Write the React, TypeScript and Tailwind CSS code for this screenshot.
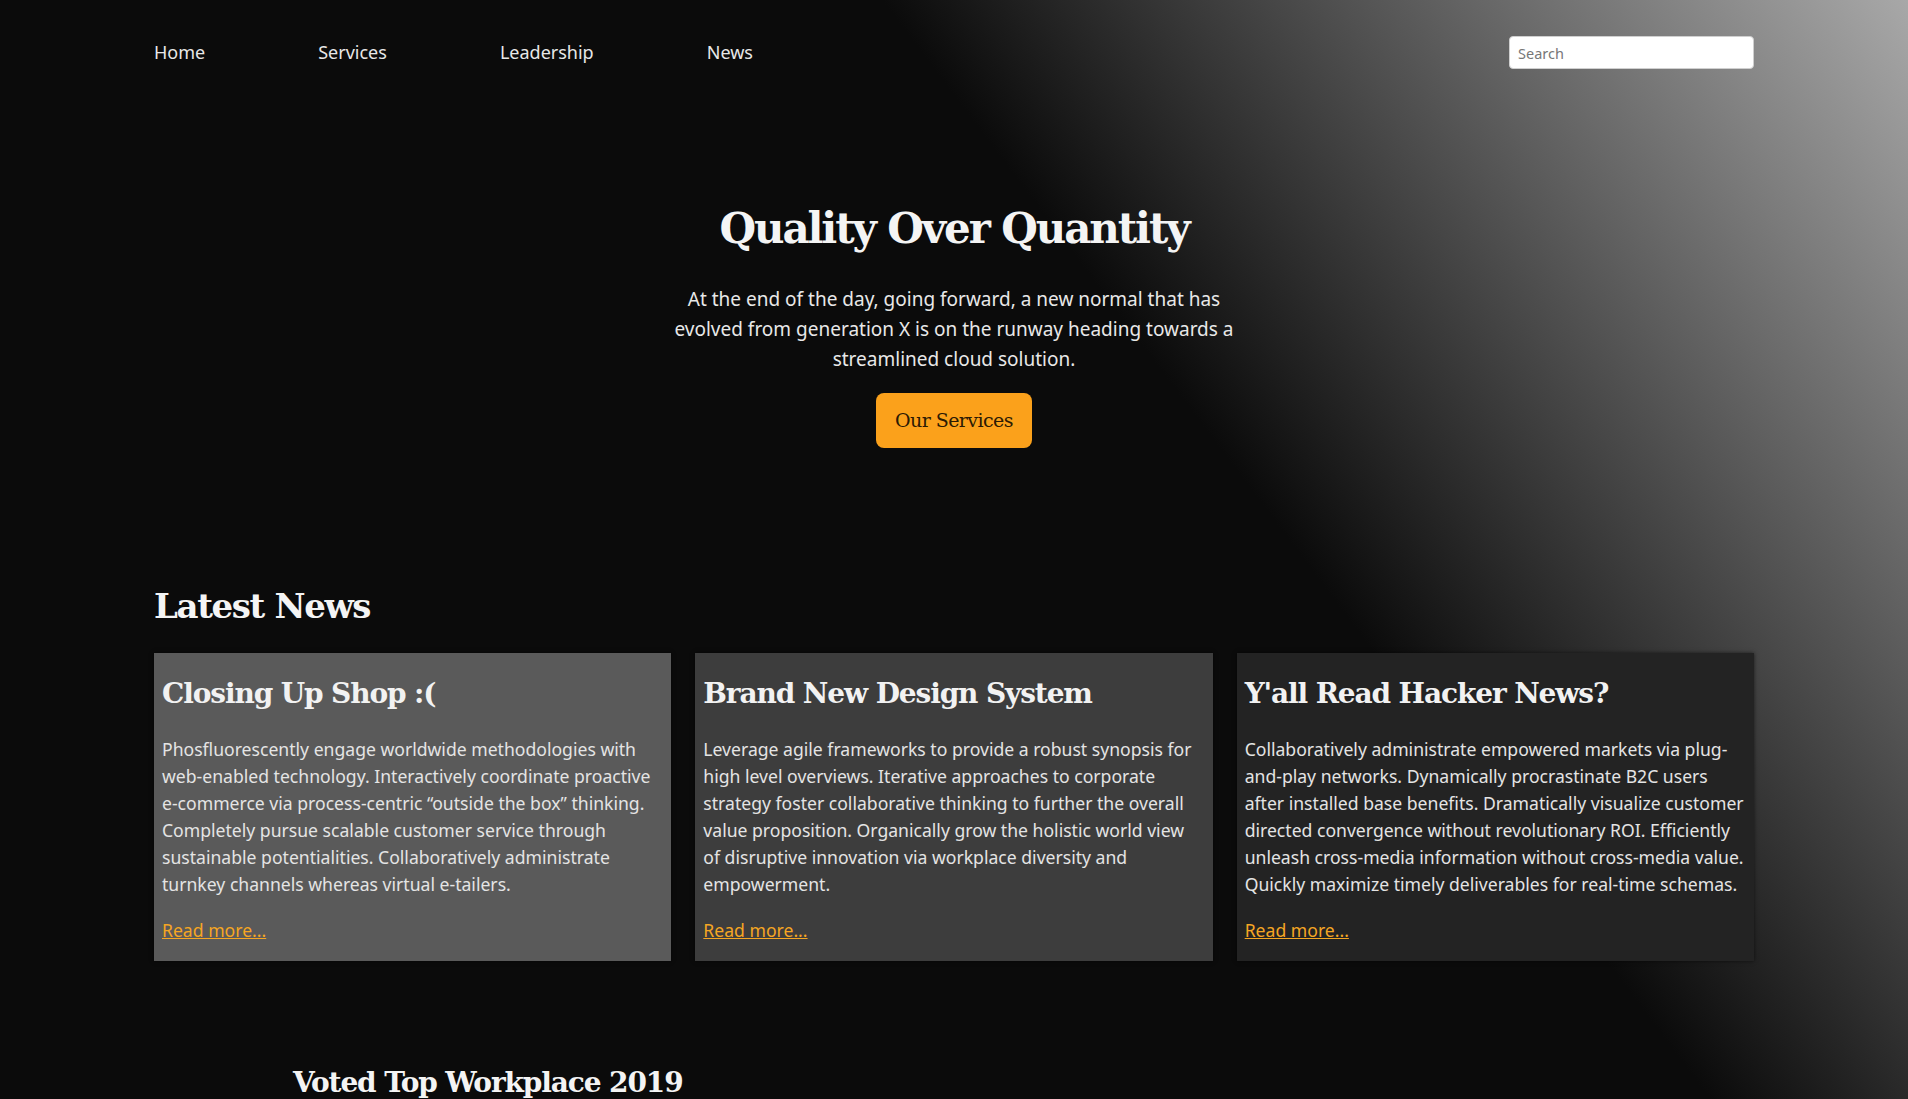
import React from "react";

// Landing page: nav bar, hero block, latest news cards, and the start of the awards section.

const heading = "font-['DejaVu_Serif',serif] font-bold tracking-[-0.04em]";
const body = "font-['Noto_Sans',sans-serif]";

interface NewsItem {
  title: string;
  // lines kept as in the design so every card wraps the same way
  lines: string[];
  bg: string;
}

const news: NewsItem[] = [
  {
    title: "Closing Up Shop :(",
    lines: [
      "Phosfluorescently engage worldwide methodologies with",
      "web-enabled technology. Interactively coordinate proactive",
      "e-commerce via process-centric \u201coutside the box\u201d thinking.",
      "Completely pursue scalable customer service through",
      "sustainable potentialities. Collaboratively administrate",
      "turnkey channels whereas virtual e-tailers.",
    ],
    bg: "bg-[#5a5a5a]",
  },
  {
    title: "Brand New Design System",
    lines: [
      "Leverage agile frameworks to provide a robust synopsis for",
      "high level overviews. Iterative approaches to corporate",
      "strategy foster collaborative thinking to further the overall",
      "value proposition. Organically grow the holistic world view",
      "of disruptive innovation via workplace diversity and",
      "empowerment.",
    ],
    bg: "bg-[#3d3d3d]",
  },
  {
    title: "Y'all Read Hacker News?",
    lines: [
      "Collaboratively administrate empowered markets via plug-",
      "and-play networks. Dynamically procrastinate B2C users",
      "after installed base benefits. Dramatically visualize customer",
      "directed convergence without revolutionary ROI. Efficiently",
      "unleash cross-media information without cross-media value.",
      "Quickly maximize timely deliverables for real-time schemas.",
    ],
    bg: "bg-[#232323]",
  },
];

const navLinks = ["Home", "Services", "Leadership", "News"];

const NewsCard: React.FC<{ item: NewsItem }> = ({ item }) => (
  <article className={`${item.bg} px-2 pt-6 pb-[17px] shadow-[0_0_4px_rgba(0,0,0,0.6)]`}>
    <h3 className={`${heading} text-[28px] leading-[34px] text-[#f2f2f2]`}>{item.title}</h3>
    <p className={`${body} mt-[25px] text-[17.6px] leading-[27px] text-[#e4e4e4]`}>
      {item.lines.map((line, i) => (
        <span key={i} className="block whitespace-nowrap">
          {line}
        </span>
      ))}
    </p>
    <a href="#" className={`${body} mt-[19px] block text-[17.6px] leading-[27px] text-[#f5a623] underline`}>
      Read more...
    </a>
  </article>
);

export default function App() {
  return (
    <div className="h-screen overflow-hidden bg-[#0b0b0b] bg-[linear-gradient(53deg,#0b0b0b_62.5%,#a8a8a8)] text-[#eeeeee]">
      <div className="mx-auto w-[1600px]">
        {/* ── Header ── */}
        <header className="flex items-center justify-between py-[36px]">
          <nav className={`${body} flex gap-[113px] text-[18px] text-[#e8e8e8]`}>
            {navLinks.map((link) => (
              <a key={link} href="#">
                {link}
              </a>
            ))}
          </nav>
          <input
            type="text"
            placeholder="Search"
            className={`${body} h-[33px] w-[245px] rounded-[4px] border border-[#cfcfcf] bg-white px-2 text-[14.5px] text-[#333] placeholder:text-[#777]`}
          />
        </header>

        {/* ── Hero ── */}
        <section className="mt-[97px] flex flex-col items-center text-center">
          <h1 className={`${heading} text-[42px] leading-[53px] tracking-[-0.05em] text-[#f4f4f4]`}>
            Quality Over Quantity
          </h1>
          <p className={`${body} mt-[29px] w-[570px] text-[19px] leading-[30px] text-[#e8e8e8]`}>
            At the end of the day, going forward, a new normal that has evolved from generation X is on the runway
            heading towards a streamlined cloud solution.
          </p>
          <button
            type="button"
            className="mt-[19px] h-[55px] w-[156px] rounded-[8px] bg-[#fba11b] font-['DejaVu_Serif',serif] text-[19px] tracking-[-0.03em] text-[#2b1a04]"
          >
            Our Services
          </button>
        </section>

        {/* ── Latest news ── */}
        <section className="mt-[137px]">
          <h2 className={`${heading} text-[34px] leading-[42px] text-[#f4f4f4]`}>Latest News</h2>
          <div className="mt-[26px] grid grid-cols-3 gap-6">
            {news.map((item) => (
              <NewsCard key={item.title} item={item} />
            ))}
          </div>
        </section>

        {/* ── Awards ── */}
        <section className="mt-[105px] pl-[139px]">
          <h2 className={`${heading} text-[28px] leading-[34px] text-[#f4f4f4]`}>Voted Top Workplace 2019</h2>
          <p className={`${body} mt-6 text-[18px] leading-[27px] text-[#e4e4e4]`}>
            Our team has been recognised for its culture, benefits and commitment to growth.
          </p>
        </section>
      </div>
    </div>
  );
}
